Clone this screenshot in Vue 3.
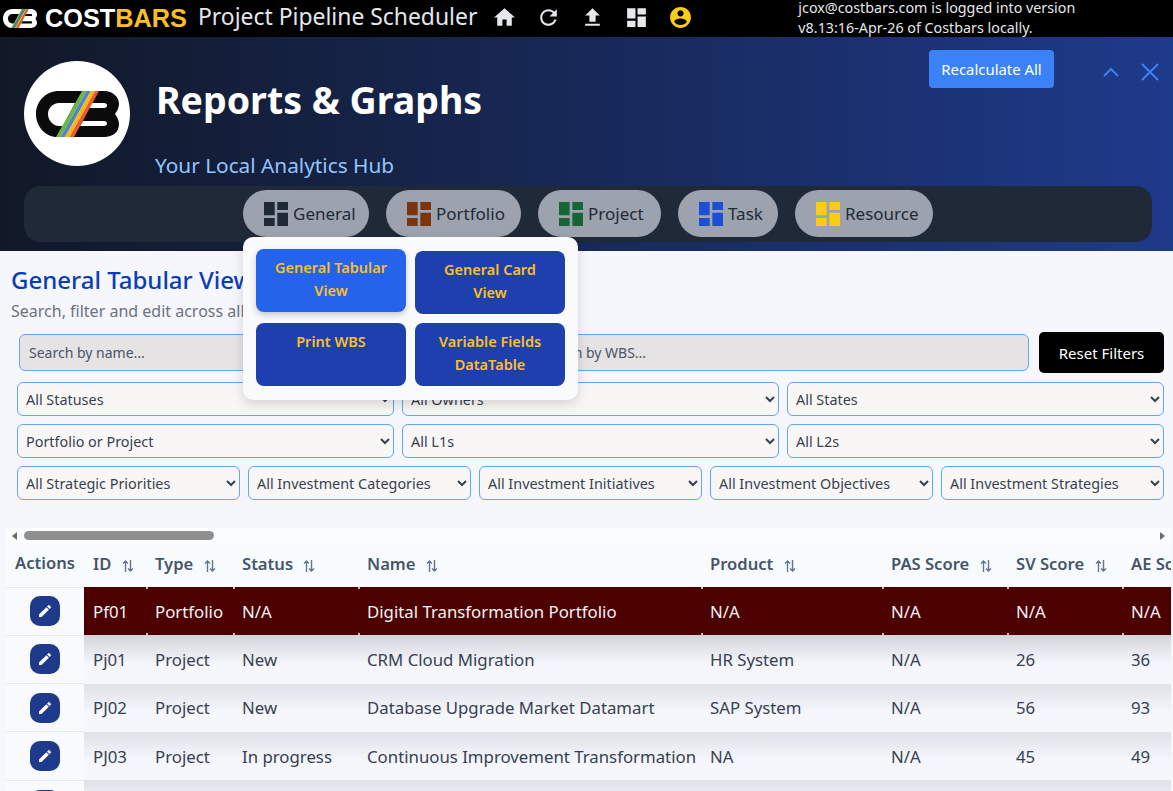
<script setup>
import { ref } from 'vue'

// logo mark, shared by the top bar and the hero circle (viewBox 0 0 83 46)
const logoC = 'M23 0H47L21 46C10 46 0 36 0 23S10 0 23 0ZM23 12C17 12 12 17 12 23S17 35 23 35H27L39 12Z'
const logoB = 'M60 0H68C77 0 83 6 83 13C83 17 81 20 79 23C81 26 83 29 83 33C83 41 77 46 68 46H36L62 0ZM55 12L52 17H68C70 17 71 16 71 14.5S70 12 68 12ZM47 30L44 35H68C70 35 71 34 71 32.5S70 30 68 30Z'
const stripes = [
  { d: 'M20 46L46 0H50.5L24.5 46Z', color: '#6fb544' },
  { d: 'M24.5 46L50.5 0H54.8L29 46Z', color: '#4f86c6' },
  { d: 'M29 46L54.8 0H59L33.5 46Z', color: '#f7b718' },
  { d: 'M33.5 46L59 0H63L38 46Z', color: '#ea5a2d' }
]

const icons = {
  home: 'M10 20v-6h4v6h5v-8h3L12 3 2 12h3v8z',
  refresh: 'M17.65 6.35C16.2 4.9 14.21 4 12 4c-4.42 0-7.99 3.58-7.99 8s3.57 8 7.99 8c3.73 0 6.84-2.55 7.73-6h-2.08c-.82 2.33-3.04 4-5.65 4-3.31 0-6-2.69-6-6s2.69-6 6-6c1.66 0 3.14.69 4.22 1.78L13 11h7V4l-2.35 2.35z',
  upload: 'M9 16h6v-6h4l-7-7-7 7h4zm-4 2h14v2H5z',
  dashboard: 'M3 13h8V3H3v10zm0 8h8v-6H3v6zm10 0h8V11h-8v10zm0-18v6h8V3h-8z',
  account: 'M12 2C6.48 2 2 6.48 2 12s4.48 10 10 10 10-4.48 10-10S17.52 2 12 2zm0 3c1.66 0 3 1.34 3 3s-1.34 3-3 3-3-1.34-3-3 1.34-3 3-3zm0 14.2c-2.5 0-4.71-1.28-6-3.22.03-1.99 4-3.08 6-3.08 1.99 0 5.97 1.09 6 3.08-1.29 1.94-3.5 3.22-6 3.22z',
  pencil: 'M3 17.25V21h3.75L17.81 9.94l-3.75-3.75L3 17.25zM20.71 7.04c.39-.39.39-1.02 0-1.41l-2.34-2.34c-.39-.39-1.02-.39-1.41 0l-1.83 1.83 3.75 3.75 1.83-1.83z'
}

const topIcons = ['home', 'refresh', 'upload', 'dashboard']

const tabs = [
  { name: 'General', color: '#1f2937', w: 126 },
  { name: 'Portfolio', color: '#78350f', w: 135 },
  { name: 'Project', color: '#166534', w: 123 },
  { name: 'Task', color: '#1d4ed8', w: 100 },
  { name: 'Resource', color: '#facc15', w: 138 }
]
const activeTab = ref('General')

const menu = [
  { label: 'General Tabular View', active: true },
  { label: 'General Card View' },
  { label: 'Print WBS' },
  { label: 'Variable Fields DataTable' }
]

const filterRows = [
  ['All Statuses', 'All Owners', 'All States'],
  ['Portfolio or Project', 'All L1s', 'All L2s'],
  ['All Strategic Priorities', 'All Investment Categories', 'All Investment Initiatives', 'All Investment Objectives', 'All Investment Strategies']
]

const columns = ['ID', 'Type', 'Status', 'Name', 'Product', 'PAS Score', 'SV Score', 'AE Score']
const widths = [78, 62, 87, 125, 343, 181, 125, 115, 140]

const rows = [
  { id: 'Pf01', type: 'Portfolio', status: 'N/A', name: 'Digital Transformation Portfolio', product: 'N/A', pas: 'N/A', sv: 'N/A', ae: 'N/A', dark: true },
  { id: 'Pj01', type: 'Project', status: 'New', name: 'CRM Cloud Migration', product: 'HR System', pas: 'N/A', sv: '26', ae: '36' },
  { id: 'PJ02', type: 'Project', status: 'New', name: 'Database Upgrade Market Datamart', product: 'SAP System', pas: 'N/A', sv: '56', ae: '93' },
  { id: 'PJ03', type: 'Project', status: 'In progress', name: 'Continuous Improvement Transformation', product: 'NA', pas: 'N/A', sv: '45', ae: '49' },
  { id: '', type: '', status: '', name: '', product: '', pas: '', sv: '', ae: '' }
]
</script>

<template>
  <div class="page">
    <!-- top bar -->
    <header class="topbar">
      <svg class="toplogo" viewBox="0 0 83 46">
        <path :d="logoC" fill="#fff" />
        <path :d="logoB" fill="#fff" />
        <path v-for="s in stripes" :key="s.color" :d="s.d" :fill="s.color" />
      </svg>
      <span class="brand">COST<b>BARS</b></span>
      <span class="apptitle">Project Pipeline Scheduler</span>
      <div class="topicons">
        <svg v-for="ic in topIcons" :key="ic" viewBox="0 0 24 24"><path :d="icons[ic]" fill="#e5e7eb" /></svg>
        <svg viewBox="0 0 24 24">
          <circle cx="12" cy="12" r="7" fill="#000" />
          <path :d="icons.account" fill="#facc15" />
        </svg>
      </div>
      <div class="loginfo">jcox@costbars.com is logged into version<br>v8.13:16-Apr-26 of Costbars locally.</div>
    </header>

    <!-- hero -->
    <section class="hero">
      <div class="herotop">
        <div class="logocircle">
          <svg viewBox="0 0 83 46">
            <path :d="logoC" fill="#0b0b0b" />
            <path :d="logoB" fill="#0b0b0b" />
            <path v-for="s in stripes" :key="s.color" :d="s.d" :fill="s.color" />
          </svg>
        </div>
        <div class="herotext">
          <h1>Reports &amp; Graphs</h1>
          <p>Your Local Analytics Hub</p>
        </div>
        <button class="recalc">Recalculate All</button>
        <svg class="herobtn chev" viewBox="0 0 16 10"><path d="M1 9L8 2L15 9" fill="none" stroke="#3b82f6" stroke-width="2" /></svg>
        <svg class="herobtn" viewBox="0 0 18 18"><path d="M1 1L17 17M17 1L1 17" fill="none" stroke="#3b82f6" stroke-width="2" /></svg>
      </div>

      <nav class="tabs">
        <div v-for="t in tabs" :key="t.name" class="tabwrap">
          <button class="tab" :style="{ width: t.w + 'px' }">
            <svg viewBox="0 0 24 24"><path :d="icons.dashboard" :fill="t.color" /></svg>
            {{ t.name }}
          </button>
          <div v-if="t.name === activeTab" class="dropdown">
            <button v-for="m in menu" :key="m.label" class="menubtn" :class="{ active: m.active }">{{ m.label }}</button>
          </div>
        </div>
      </nav>
    </section>

    <!-- main content -->
    <main class="content">
      <h2>General Tabular View</h2>
      <p class="sub">Search, filter and edit across all projects</p>

      <div class="searchrow">
        <input class="search" placeholder="Search by name...">
        <input class="search" placeholder="Search by WBS...">
        <button class="reset">Reset Filters</button>
      </div>

      <div v-for="(r, i) in filterRows" :key="i" class="filterrow">
        <select v-for="f in r" :key="f" class="filter">
          <option>{{ f }}</option>
        </select>
      </div>

      <div class="tablebox">
        <div class="scrollbar">
          <i class="arrow left"></i>
          <div class="thumb"></div>
          <i class="arrow right"></i>
        </div>
        <div class="tableclip">
          <table>
            <colgroup>
              <col v-for="(w, i) in widths" :key="i" :width="w">
            </colgroup>
            <thead>
              <tr>
                <th>Actions</th>
                <th v-for="c in columns" :key="c">
                  {{ c }}
                  <svg class="sort" viewBox="0 0 12 14"><path d="M3.5 13V2M1 4.5L3.5 2L6 4.5M8.5 1V12M6 9.5L8.5 12L11 9.5" fill="none" stroke="#64748b" stroke-width="1.4" /></svg>
                </th>
              </tr>
            </thead>
            <tbody>
              <tr v-for="(r, i) in rows" :key="i" :class="{ dark: r.dark }">
                <td class="act">
                  <button class="edit"><svg viewBox="0 0 24 24"><path :d="icons.pencil" fill="#fff" /></svg></button>
                </td>
                <td>{{ r.id }}</td>
                <td>{{ r.type }}</td>
                <td>{{ r.status }}</td>
                <td>{{ r.name }}</td>
                <td>{{ r.product }}</td>
                <td>{{ r.pas }}</td>
                <td>{{ r.sv }}</td>
                <td>{{ r.ae }}</td>
              </tr>
            </tbody>
          </table>
        </div>
      </div>
    </main>
  </div>
</template>

<style scoped>
.page {
  height: 791px;
  overflow: hidden;
  background: #f5f7fd;
  font-family: "Noto Sans", "Open Sans", sans-serif;
  color: #374151;
}

/* top bar */
.topbar {
  height: 37px;
  background: #000;
  display: flex;
  align-items: center;
  overflow: hidden;
}
.toplogo {
  width: 34px;
  height: 19px;
  margin-left: 3px;
}
.brand {
  margin-left: 8px;
  font-family: "Liberation Sans", sans-serif;
  font-weight: 700;
  font-size: 25.3px;
  color: #fff;
}
.brand b {
  color: #fbbf24;
}
.apptitle {
  margin-left: 11px;
  padding-bottom: 4px;
  font-size: 22.9px;
  color: #e5e7eb;
  white-space: nowrap;
}
.topicons {
  display: flex;
  gap: 19px;
  margin-left: 15px;
  padding-bottom: 2px;
}
.topicons svg {
  width: 25px;
  height: 25px;
  display: block;
}
.loginfo {
  margin-left: 105px;
  padding-bottom: 2px;
  font-size: 14.3px;
  line-height: 20px;
  color: #e5e7eb;
  white-space: nowrap;
}

/* hero */
.hero {
  height: 214px;
  box-sizing: border-box;
  background: linear-gradient(90deg, #111827, #1e3a8a);
  padding: 13px 21px 0 24px;
}
.herotop {
  display: flex;
  align-items: flex-start;
  height: 136px;
  margin-right: -7px;
}
.logocircle {
  width: 106px;
  height: 105px;
  margin-top: 11px;
  border-radius: 50%;
  background: #fff;
  display: flex;
  align-items: center;
  justify-content: center;
  flex-shrink: 0;
}
.logocircle svg {
  width: 83px;
  height: 46px;
}
.herotext {
  margin-left: 26px;
  flex: 1;
}
.herotext h1 {
  margin: 26px 0 0;
  font-size: 37.5px;
  line-height: 48px;
  font-weight: 700;
  color: #fff;
}
.herotext p {
  margin: 27px 0 0 -1px;
  font-size: 20.8px;
  line-height: 28px;
  color: #93c5fd;
}
.recalc {
  width: 125px;
  height: 38px;
  border: none;
  border-radius: 4px;
  background: #3b82f6;
  color: #fff;
  font: inherit;
  font-size: 14.9px;
}
.herobtn {
  width: 18px;
  height: 18px;
  margin: 13px 0 0 22px;
}
.herobtn.chev {
  width: 16px;
  height: 10px;
  margin: 17px 0 0 49px;
}
.tabs {
  height: 56px;
  box-sizing: border-box;
  padding-top: 4px;
  background: #1f2937;
  border-radius: 16px;
  display: flex;
  justify-content: center;
  gap: 17px;
}
.tabwrap {
  position: relative;
}
.tab {
  height: 47px;
  padding: 0 0 0 17px;
  border: none;
  border-radius: 24px;
  background: #9ca3af;
  color: #1f2937;
  font: inherit;
  font-size: 17px;
  white-space: nowrap;
  display: flex;
  align-items: center;
  gap: 1px;
}
.tab svg {
  width: 32px;
  height: 32px;
  flex-shrink: 0;
}
.dropdown {
  position: absolute;
  top: 47px;
  left: 0;
  z-index: 5;
  width: 335px;
  height: 163px;
  box-sizing: border-box;
  padding: 14px 13px;
  background: #f8fafc;
  border-radius: 10px;
  box-shadow: 0 4px 12px rgba(0, 0, 0, 0.15);
  display: grid;
  grid-template-columns: 150px 150px;
  grid-auto-rows: 63px;
  gap: 9px;
}
.menubtn {
  border: none;
  border-radius: 8px;
  background: #1e40af;
  color: #fbbf24;
  font: inherit;
  font-size: 14.5px;
  font-weight: 600;
  line-height: 23px;
  padding: 7px 14px 0;
  text-align: center;
  display: flex;
  align-items: flex-start;
  justify-content: center;
}
.menubtn.active {
  background: #2563eb;
  transform: translateY(-2px);
  box-shadow: 0 3px 6px rgba(0, 0, 0, 0.2);
}

/* content */
.content {
  padding: 11px 2px 0 0;
}
.content h2 {
  margin: 0 0 0 11px;
  font-size: 24px;
  line-height: 36px;
  font-weight: 500;
  color: #0b3db8;
}
.sub {
  margin: 1px 0 0 11px;
  font-size: 16px;
  line-height: 24px;
  color: #6b7280;
}
.searchrow {
  display: flex;
  align-items: center;
  gap: 8px;
  margin: 9px 7px 9px 19px;
}
.search {
  flex: 1;
  min-width: 0;
  height: 37px;
  box-sizing: border-box;
  padding: 0 9px;
  border: 1px solid #60a5fa;
  border-radius: 6px;
  background: #e5e3e3;
  font: inherit;
  font-size: 14px;
}
.search::placeholder {
  color: #4b5563;
}
.reset {
  width: 125px;
  height: 41px;
  margin-left: 2px;
  border: none;
  border-radius: 5px;
  background: #000;
  color: #fff;
  font: inherit;
  font-size: 15px;
}
.filterrow {
  display: flex;
  gap: 8px;
  margin: 0 7px 8px 17px;
}
.filter {
  flex: 1 1 0;
  min-width: 0;
  height: 34px;
  padding: 0 4px;
  border: 1px solid #60a5fa;
  border-radius: 6px;
  background-color: #f9f7f5;
  color: #374151;
  font: inherit;
  font-size: 14.4px;
}
.tablebox {
  margin: 28px 0 0 6px;
}
.scrollbar {
  height: 15px;
  background: #fbfcfe;
  display: flex;
  align-items: center;
  padding: 0 6px;
}
.thumb {
  width: 190px;
  height: 9px;
  margin-left: 7px;
  background: #8f8f8f;
  border-radius: 5px;
}
.arrow {
  width: 0;
  height: 0;
  border-top: 4px solid transparent;
  border-bottom: 4px solid transparent;
}
.arrow.left {
  border-right: 5px solid #6b6b6b;
}
.arrow.right {
  margin-left: auto;
  border-left: 5px solid #6b6b6b;
}
.tableclip {
  overflow: hidden;
}
table {
  border-collapse: collapse;
  table-layout: fixed;
  width: 1256px;
}
th {
  height: 44px;
  padding: 0 9px 4px;
  box-sizing: border-box;
  text-align: left;
  font-size: 16.6px;
  font-weight: 600;
  color: #475569;
  background: #f8fbfe;
  white-space: nowrap;
}
.sort {
  width: 12px;
  height: 14px;
  margin-left: 6px;
  vertical-align: -3px;
}
td {
  height: 48.3px;
  padding: 0 9px;
  box-sizing: border-box;
  font-size: 16.8px;
  white-space: nowrap;
  background: linear-gradient(180deg, #dfe1e8, #f5f7fd 60%);
}
td.act {
  background: #f8fafd;
  border-top: 1px solid #e4e8ef;
  text-align: center;
  padding: 0;
}
.edit {
  width: 30px;
  height: 30px;
  padding: 7px;
  border: none;
  border-radius: 10px;
  background: #1e3a8a;
  display: block;
  margin: 0 auto;
}
.edit svg {
  display: block;
  width: 16px;
  height: 16px;
}
tr.dark td:not(.act) {
  background: #4d0000;
  color: #f3f4f6;
  position: relative;
}
tr.dark + tr td:not(.act) {
  background: linear-gradient(180deg, #d3d5dc, #f5f7fd 60%);
}
/* the small light dots on the column lines of the selected row */
tr.dark td:nth-child(n+3)::before,
tr.dark td:nth-child(n+3)::after {
  content: "";
  position: absolute;
  left: 0;
  width: 2px;
  height: 2px;
  background: #c9bcbc;
}
tr.dark td:nth-child(n+3)::before {
  top: 0;
}
tr.dark td:nth-child(n+3)::after {
  bottom: 0;
}
</style>

<style>
html, body {
  margin: 0;
  overflow: hidden;
}
</style>
